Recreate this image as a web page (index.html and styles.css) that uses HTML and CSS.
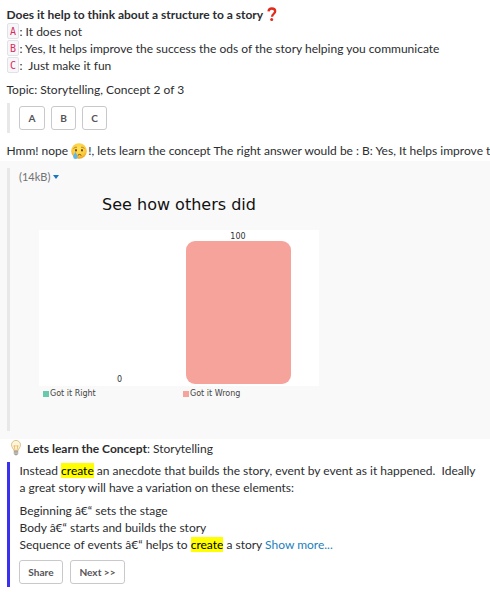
FILE: index.html
```
<!DOCTYPE html>
<html lang="en">
<head>
<meta charset="utf-8">
<title>Storytelling</title>
<link rel="stylesheet" href="styles.css">
</head>
<body>
<main class="message">
  <section class="block question">
    <p class="line"><b>Does it help to think about a structure to a story</b><svg class="question-mark" viewBox="0 0 10 15"><path d="M1.500 4.300C1.700 2.300 3 1.500 4.800 1.500c2 0 3.400 1 3.400 2.800C8.200 6.800 5.200 6.700 5 9.800" fill="none" stroke="#e02b1d" stroke-width="2.300"/><circle cx="4.700" cy="12.600" r="1.500" fill="#e02b1d"/></svg></p>
    <p class="line"><code>A</code>: It does not</p>
    <p class="line"><code>B</code>: Yes, It helps improve the success the ods of the story helping you communicate</p>
    <p class="line"><code>C</code>:&nbsp; Just make it fun</p>
  </section>
  <p class="line topic">Topic: Storytelling, Concept 2 of 3</p>
  <div class="attachment answers">
    <button>A</button><button>B</button><button>C</button>
  </div>
  <p class="line feedback">Hmm! nope <svg class="cry" viewBox="0 0 16 16"><defs><radialGradient id="face" cx=".5" cy=".35" r=".65"><stop offset="0" stop-color="#ffe45b"/><stop offset=".7" stop-color="#fcc93a"/><stop offset="1" stop-color="#e79d21"/></radialGradient></defs><circle cx="8" cy="8" r="7.800" fill="url(#face)"/><path d="M2.500 5.600Q4 3.800 6 4.200M10 4.200Q12 3.800 13.500 5.600" fill="none" stroke="#a8701d" stroke-width=".8"/><ellipse cx="5" cy="7.200" rx=".9" ry="1.200" fill="#644018"/><ellipse cx="11" cy="7.200" rx=".9" ry="1.200" fill="#644018"/><path d="M6.800 12.300Q8.500 10.500 10.400 12.300" fill="none" stroke="#754719" stroke-width="1"/><path d="M4.400 8.800C3.500 11 2.200 12 2.200 13.700a2.200 2.200 0 0 0 4.400 0C6.600 12 5.200 11 4.400 8.800Z" fill="#5db8ed"/></svg>!, lets learn the concept The right answer would be : B: Yes, It helps improve t</p>
  <section class="results">
    <div class="attachment chart">
      <p class="line filesize">(14kB)<i class="caret"></i></p>
      <h2>See how others did</h2>
      <div class="plot">
        <div class="column"><span class="value">0</span></div>
        <div class="column"><span class="value">100</span><div class="bar"></div></div>
      </div>
      <div class="legend">
        <span><i class="swatch right"></i>Got it Right</span>
        <span><i class="swatch wrong"></i>Got it Wrong</span>
      </div>
    </div>
  </section>
  <p class="line concept"><svg class="bulb" viewBox="0 0 12 16"><path d="M3.800 10.500C3.600 8.500 1.500 7.500 1.500 4.900a4.500 4.500 0 0 1 9 0C10.500 7.500 8.400 8.500 8.200 10.500Z" fill="#fff6dc" stroke="#dfc08b"/><path d="M5 10 4 5.500 5.200 6.400 6 5.500 6.800 6.400 8 5.500 7 10" fill="none" stroke="#e7a83e" stroke-width=".7"/><path d="M3.800 10.700h4.400v3L7 15.300H5l-1.200-1.600Z" fill="#9c9c98"/><path d="M3.800 12.200h4.400M4 13.700h4" stroke="#d8d8d5" stroke-width=".6"/></svg><b>Lets learn the Concept</b>: Storytelling</p>
  <section class="attachment lesson">
    <p class="line">Instead <mark>create</mark> an anecdote that builds the story, event by event as it happened.&nbsp; Ideally</p>
    <p class="line">a great story will have a variation on these elements:</p>
    <p class="line gap">Beginning â€“ sets the stage</p>
    <p class="line">Body â€“ starts and builds the story</p>
    <p class="line">Sequence of events â€“ helps to <mark>create</mark> a story <a>Show more...</a></p>
    <div class="actions"><button>Share</button><button>Next &gt;&gt;</button></div>
  </section>
</main>
</body>
</html>
```
FILE: styles.css
```
* { box-sizing: border-box; }
body {
  margin: 0;
  background: #fff;
  color: #2c2d30;
  font: 12px/17px Lato, "Liberation Sans", sans-serif;
  overflow: hidden;
}
.message { width: 490px; height: 592px; padding-top: 6px; overflow: hidden; }
.line { margin: 0; height: 17px; white-space: nowrap; }
.line svg { display: inline-block; }
.question { padding-left: 6.5px; }
.question-mark { width: 10px; height: 15px; margin-left: 4px; vertical-align: -3px; }
code {
  display: inline-block;
  width: 12px;
  height: 16px;
  margin: 0 .5px 0 .5px;
  border: 1px solid #e1e1e8;
  border-radius: 2px;
  background: #f7f7f9;
  color: #d72b5f;
  font: 10px/15px "DejaVu Sans Mono", monospace;
  text-align: center;
  vertical-align: top;
}
.topic { margin: 7px 0 5px 6.5px; }
.attachment { margin-left: 7px; border-left: 3px solid #e8e8e8; padding-left: 9px; }
button {
  height: 24px;
  padding: 0;
  border: 1px solid #c9c9cb;
  border-radius: 3px;
  background: #fff;
  color: #555459;
  font: 700 10.1px/20px Lato, "Liberation Sans", sans-serif;
}
.answers { display: flex; gap: 6px; height: 30px; padding-top: 3px; }
.answers button { width: 25px; }
.answers button:first-child { width: 26px; }
.feedback { margin: 9px 0 2px 6.5px; }
.cry { width: 16px; height: 16px; vertical-align: -4px; margin: 0 1px 0 0; }
.results { height: 278px; padding-top: 7px; background: #f9f9f9; }
.chart { height: 263px; }
.filesize { color: #717274; font-size: 11px; display: flex; align-items: center; }
.caret { margin-left: 3px; border: 3px solid transparent; border-top: 4px solid #1479bf; border-bottom: 0; }
h2 {
  width: 280px;
  margin: 8px 0 14px 20px;
  color: #111;
  font: 400 16px/23px "DejaVu Sans", sans-serif;
  text-align: center;
}
.plot { display: flex; width: 280px; height: 156px; margin-left: 20px; background: #fff; }
.column {
  width: 140px;
  display: flex;
  flex-direction: column;
  align-items: center;
  justify-content: flex-end;
  padding: 0 0 2px 21px;
}
.column + .column { padding: 0 0 2px 6.5px; width: 111.5px; margin-left: 0; margin-right: 28.5px; }
.value { font: 8px/8px "DejaVu Sans", sans-serif; color: #333; }
.bar { width: 105px; height: 143px; border-radius: 9px; background: #f6a39b; }
.legend { display: flex; margin: 3px 0 0 24px; font: 8px/10px "DejaVu Sans", sans-serif; color: #444; }
.legend span { display: flex; align-items: center; width: 140px; }
.swatch { width: 6px; height: 6px; margin-right: 1px; }
.right { background: #69c9ad; }
.wrong { background: #f6a39b; }
.concept { margin: 1px 0 5px 10px; }
.bulb { width: 12px; height: 16px; margin-right: 5px; vertical-align: -3px; }
.lesson { height: 125px; border-color: #3a30f0; padding-left: 9.5px; }
.gap { margin-top: 6px; }
mark { background: #ff0; color: #000; }
a { color: #1c80bc; }
.actions { display: flex; gap: 7px; margin: 7px 0 0 -.5px; }
.actions button { width: 44px; }
.actions button:last-child { width: 55px; }
```
